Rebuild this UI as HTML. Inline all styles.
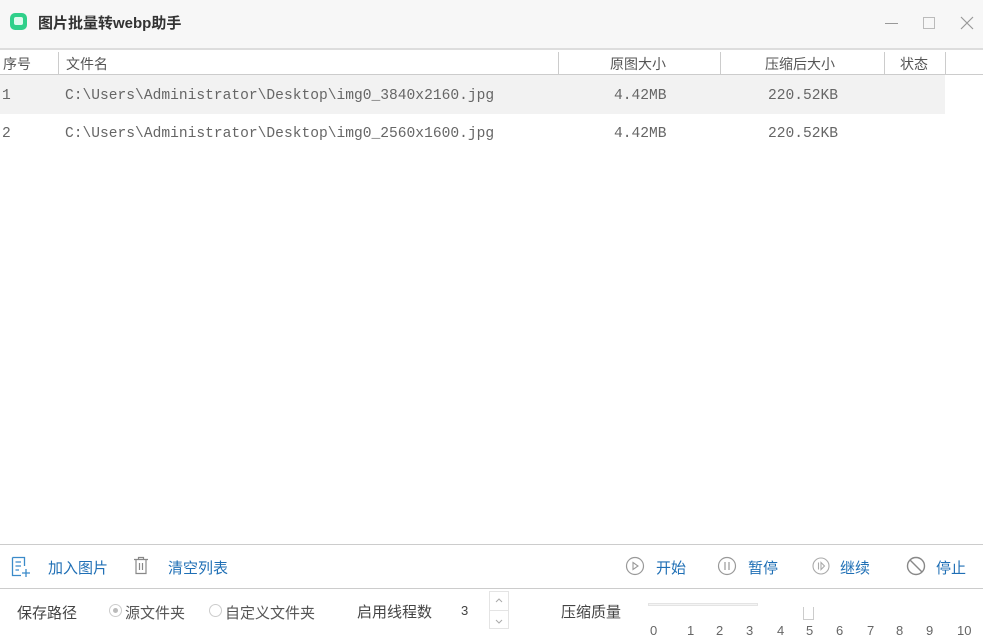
<!DOCTYPE html>
<html><head><meta charset="utf-8"><style>
*{margin:0;padding:0;box-sizing:border-box}
body{width:983px;height:640px;overflow:hidden;background:#fff;font-family:"Liberation Sans","Noto Sans CJK SC",sans-serif;position:relative;color:#333}
.a{position:absolute;white-space:nowrap}
.mono{font-family:"Liberation Mono","Noto Sans CJK SC",monospace;color:#666;font-size:14.6px}
.cn{font-size:14px}
.blue{color:#1f6fb5;font-size:15px}
.vl{position:absolute;width:1px;background:#ccc;top:52px;height:22px}
</style></head><body>
<div class="a" style="left:0;top:0;width:983px;height:48px;background:#f7f7f7"></div>
<div class="a" style="left:10px;top:13px;width:17px;height:17px;border-radius:5px;background:#2fd08a"></div>
<div class="a" style="left:14px;top:17px;width:9px;height:8px;border-radius:2px;background:#dffaee"></div>
<div class="a" style="left:38px;top:12px;font-size:15px;font-weight:bold;color:#333">图片批量转webp助手</div>
<div class="a" style="left:885px;top:23px;width:13px;height:1px;background:#999"></div>
<div class="a" style="left:923px;top:17px;width:12px;height:12px;border:1px solid #bbb"></div>
<svg class="a" style="left:960px;top:16px" width="14" height="14"><path d="M1 1L13 13M13 1L1 13" stroke="#999" stroke-width="1.2"/></svg>
<div class="a" style="left:0;top:48px;width:983px;height:2px;background:#ddd"></div>
<div class="a" style="left:0;top:74px;width:983px;height:1px;background:#ccc"></div>
<div class="vl" style="left:58px"></div><div class="vl" style="left:558px"></div><div class="vl" style="left:720px"></div><div class="vl" style="left:884px"></div><div class="vl" style="left:945px"></div>
<div class="a cn" style="left:3px;top:54px;color:#555">序号</div>
<div class="a cn" style="left:66px;top:54px;color:#555">文件名</div>
<div class="a cn" style="left:610px;top:54px;color:#555">原图大小</div>
<div class="a cn" style="left:765px;top:54px;color:#555">压缩后大小</div>
<div class="a cn" style="left:900px;top:54px;color:#555">状态</div>
<div class="a" style="left:0;top:75px;width:945px;height:39px;background:#f2f2f2"></div>
<div class="a mono" style="left:2px;top:88px">1</div>
<div class="a mono" style="left:65px;top:88px">C:\Users\Administrator\Desktop\img0_3840x2160.jpg</div>
<div class="a mono" style="left:614px;top:88px">4.42MB</div>
<div class="a mono" style="left:768px;top:88px">220.52KB</div>
<div class="a mono" style="left:2px;top:126px">2</div>
<div class="a mono" style="left:65px;top:126px">C:\Users\Administrator\Desktop\img0_2560x1600.jpg</div>
<div class="a mono" style="left:614px;top:126px">4.42MB</div>
<div class="a mono" style="left:768px;top:126px">220.52KB</div>
<div class="a" style="left:0;top:544px;width:983px;height:1px;background:#ccc"></div>
<div class="a" style="left:0;top:588px;width:983px;height:1px;background:#ccc"></div>
<svg class="a" style="left:11px;top:556px" width="20" height="22"><path d="M1.5 1.5H13.5V10M1.5 1.5V19.5H10M4.5 6H10M4.5 10H10M4.5 14H8M11 17H19M15 13V21" stroke="#3a8ac9" stroke-width="1.3" fill="none"/></svg>
<div class="a blue" style="left:48px;top:557px">加入图片</div>
<svg class="a" style="left:133px;top:556px" width="16" height="19"><path d="M1 3.5H15M5.5 3.5V1.5H10.5V3.5M3 3.5V17.5H13V3.5M6.5 7V14M9.5 7V14" stroke="#888" stroke-width="1.2" fill="none"/></svg>
<div class="a blue" style="left:168px;top:557px">清空列表</div>
<svg class="a" style="left:625px;top:556px" width="20" height="20"><circle cx="10" cy="10" r="8.5" stroke="#999" fill="none" stroke-width="1.2"/><path d="M8 6.5L13 10L8 13.5Z" stroke="#999" fill="none" stroke-width="1.1"/></svg>
<div class="a blue" style="left:656px;top:557px">开始</div>
<svg class="a" style="left:717px;top:556px" width="20" height="20"><circle cx="10" cy="10" r="8.5" stroke="#999" fill="none" stroke-width="1.2"/><path d="M8 6V14M12 6V14" stroke="#999" stroke-width="1.2"/></svg>
<div class="a blue" style="left:748px;top:557px">暂停</div>
<svg class="a" style="left:811px;top:556px" width="20" height="20"><circle cx="10" cy="10" r="8" stroke="#aaa" fill="none" stroke-width="1.1"/><path d="M7.5 6.5V13.5M10 6.5L13.5 10L10 13.5Z" stroke="#aaa" fill="none" stroke-width="1.1"/></svg>
<div class="a blue" style="left:840px;top:557px">继续</div>
<svg class="a" style="left:906px;top:556px" width="20" height="20"><circle cx="10" cy="10" r="8.5" stroke="#888" fill="none" stroke-width="1.4"/><path d="M4 4L16 16" stroke="#888" stroke-width="1.4"/></svg>
<div class="a blue" style="left:936px;top:557px">停止</div>
<div class="a cn" style="left:17px;top:602px;font-size:15px;color:#444">保存路径</div>
<div class="a" style="left:109px;top:604px;width:13px;height:13px;border:1px solid #ccc;border-radius:50%"></div>
<div class="a" style="left:113px;top:608px;width:5px;height:5px;background:#bbb;border-radius:50%"></div>
<div class="a cn" style="left:125px;top:602px;font-size:15px;color:#555">源文件夹</div>
<div class="a" style="left:209px;top:604px;width:13px;height:13px;border:1px solid #ccc;border-radius:50%"></div>
<div class="a cn" style="left:225px;top:602px;font-size:15px;color:#555">自定义文件夹</div>
<div class="a cn" style="left:357px;top:601px;font-size:15px;color:#444">启用线程数</div>
<div class="a" style="left:461px;top:603px;font-size:13px;color:#444">3</div>
<div class="a" style="left:489px;top:591px;width:20px;height:38px;border:1px solid #e4e4e4"></div>
<div class="a" style="left:489px;top:610px;width:20px;height:1px;background:#e4e4e4"></div>
<svg class="a" style="left:494px;top:596px" width="10" height="30"><path d="M2 6L5 3L8 6M2 24L5 27L8 24" stroke="#aaa" fill="none"/></svg>
<div class="a cn" style="left:561px;top:601px;font-size:15px;color:#444">压缩质量</div>
<div class="a" style="left:648px;top:603px;width:110px;height:3px;border:1px solid #e4e4e4;background:#f4f4f4"></div>
<div class="a" style="left:803px;top:607px;width:11px;height:13px;border:1px solid #ccc;border-top:none"></div>
<div class="a" style="left:648px;top:623px;width:330px;font-size:13px;color:#666">
<span class="a" style="left:2px">0</span><span class="a" style="left:39px">1</span><span class="a" style="left:68px">2</span><span class="a" style="left:98px">3</span><span class="a" style="left:129px">4</span><span class="a" style="left:158px">5</span><span class="a" style="left:188px">6</span><span class="a" style="left:219px">7</span><span class="a" style="left:248px">8</span><span class="a" style="left:278px">9</span><span class="a" style="left:309px">10</span></div>
</body></html>
